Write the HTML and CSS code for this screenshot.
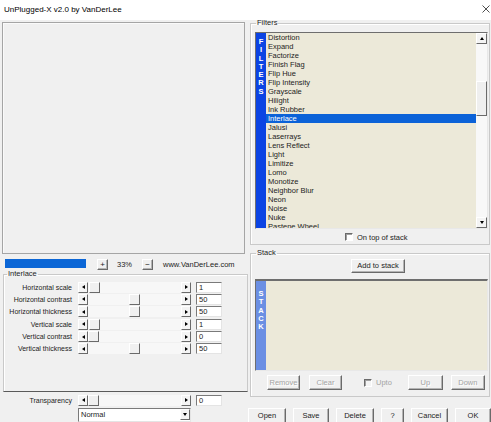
FILE: index.html
```html
<!DOCTYPE html>
<html lang="en">
  <head>
    <meta charset="UTF-8" />
    <title>UnPlugged-X v2.0 by VanDerLee</title>
    <link rel="stylesheet" href="styles.css">
  </head>
  <body>
    <div class="titlebar">
      <span class="title">UnPlugged-X v2.0 by VanDerLee</span>
      <svg class="close" width="8" height="8" viewBox="0 0 8 8"><path d="M0.5 0.5L7.5 7.5M7.5 0.5L0.5 7.5" stroke="#222" stroke-width="0.8" fill="none"/></svg>
    </div>

    <div class="main">
      <div class="left">
        <div class="preview"></div>

        <div class="zoombar">
          <div class="progress"></div>
          <div class="btn sq plus">+</div>
          <span class="pct">33%</span>
          <div class="btn sq">&minus;</div>
          <span class="site">www.VanDerLee.com</span>
        </div>

        <fieldset class="group interlace">
          <legend>Interlace</legend>
          <div class="param">
            <label>Horizontal scale</label>
            <div class="hscroll"><span class="sbtn arr-l"></span><span class="track"><span class="thumb" style="margin-left:1px"></span></span><span class="sbtn arr-r"></span></div>
            <div class="edit">1</div>
          </div>
          <div class="param">
            <label>Horizontal contrast</label>
            <div class="hscroll"><span class="sbtn arr-l"></span><span class="track"><span class="thumb" style="margin-left:41px"></span></span><span class="sbtn arr-r"></span></div>
            <div class="edit">50</div>
          </div>
          <div class="param">
            <label>Horizontal thickness</label>
            <div class="hscroll"><span class="sbtn arr-l"></span><span class="track"><span class="thumb" style="margin-left:41px"></span></span><span class="sbtn arr-r"></span></div>
            <div class="edit">50</div>
          </div>
          <div class="param">
            <label>Vertical scale</label>
            <div class="hscroll"><span class="sbtn arr-l"></span><span class="track"><span class="thumb" style="margin-left:1px"></span></span><span class="sbtn arr-r"></span></div>
            <div class="edit">1</div>
          </div>
          <div class="param">
            <label>Vertical contrast</label>
            <div class="hscroll"><span class="sbtn arr-l"></span><span class="track"><span class="thumb" style="margin-left:0px"></span></span><span class="sbtn arr-r"></span></div>
            <div class="edit">0</div>
          </div>
          <div class="param">
            <label>Vertical thickness</label>
            <div class="hscroll"><span class="sbtn arr-l"></span><span class="track"><span class="thumb" style="margin-left:41px"></span></span><span class="sbtn arr-r"></span></div>
            <div class="edit">50</div>
          </div>
        </fieldset>

        <div class="param transparency">
          <label>Transparency</label>
          <div class="hscroll"><span class="sbtn arr-l"></span><span class="track"><span class="thumb" style="margin-left:0px"></span></span><span class="sbtn arr-r"></span></div>
          <div class="edit">0</div>
        </div>
        <div class="select"><span class="sel-text">Normal</span><span class="sbtn arr-d"></span></div>
      </div>

      <div class="right">
        <fieldset class="group filters">
          <legend>Filters</legend>
          <div class="listbox filter-list">
            <div class="sidebar">F<br>I<br>L<br>T<br>E<br>R<br>S</div>
            <ul class="items">
              <li>Distortion</li>
              <li>Expand</li>
              <li>Factorize</li>
              <li>Finish Flag</li>
              <li>Flip Hue</li>
              <li>Flip Intensity</li>
              <li>Grayscale</li>
              <li>Hilight</li>
              <li>Ink Rubber</li>
              <li class="selected">Interlace</li>
              <li>Jalusi</li>
              <li>Laserrays</li>
              <li>Lens Reflect</li>
              <li>Light</li>
              <li>Limitize</li>
              <li>Lomo</li>
              <li>Monotize</li>
              <li>Neighbor Blur</li>
              <li>Neon</li>
              <li>Noise</li>
              <li>Nuke</li>
              <li>Pastene Wheel</li>
            </ul>
            <div class="vscroll">
              <span class="sbtn arr-u"></span>
              <span class="vtrack"><span class="vthumb"></span></span>
              <span class="sbtn arr-d"></span>
            </div>
          </div>
          <div class="check-row ontop"><span class="checkbox"></span>On top of stack</div>
        </fieldset>

        <fieldset class="group stack">
          <legend>Stack</legend>
          <div class="btn add">Add to stack</div>
          <div class="listbox stack-list">
            <div class="sidebar">S<br>T<br>A<br>C<br>K</div>
            <div class="stack-items"></div>
          </div>
          <div class="stack-buttons">
            <div class="btn disabled b-remove">Remove</div>
            <div class="btn disabled b-clear">Clear</div>
            <div class="check-row upto disabled"><span class="checkbox"></span>Upto</div>
            <div class="btn disabled b-up">Up</div>
            <div class="btn disabled b-down">Down</div>
          </div>
        </fieldset>

        <div class="bottom-buttons">
          <div class="btn b-open">Open</div>
          <div class="btn b-save">Save</div>
          <div class="btn b-delete">Delete</div>
          <div class="btn b-help">?</div>
          <div class="btn b-cancel">Cancel</div>
          <div class="btn b-ok">OK</div>
        </div>
      </div>
    </div>
  </body>
</html>
```

FILE: styles.css
```css
body {
  margin: 0;
  width: 491px;
  height: 422px;
  overflow: hidden;
  background-color: #f0f0f0;
  font-family: "Liberation Sans", Arial, sans-serif;
  font-size: 7.5px;
  color: #1c1c1c;
}

/* title bar */
.titlebar {
  height: 20px;
  background-color: #fff;
  display: flex;
  align-items: center;
  justify-content: space-between;
  padding: 0 1px 2px 4px;
  box-sizing: border-box;
}
.title {
  font-size: 8px;
  color: #000;
}
.close {
  margin-bottom: 1px;
}

.main {
  display: grid;
  grid-template-columns: 245px 246px;
}

/* common controls */
.btn {
  box-sizing: border-box;
  background-color: #f0f0f0;
  border: 1px solid;
  border-color: #fff #6a6a6a #6a6a6a #fff;
  box-shadow: inset -1px -1px #b4b4b4;
  display: flex;
  align-items: center;
  justify-content: center;
  line-height: 1;
}
.btn.disabled {
  color: #a3a3a3;
  text-shadow: 1px 1px #fff;
}

.sbtn {
  box-sizing: border-box;
  width: 10px;
  height: 11px;
  flex: none;
  background-color: #f4f4f4;
  border: 1px solid;
  border-color: #fff #6a6a6a #6a6a6a #fff;
  display: flex;
  align-items: center;
  justify-content: center;
}
.sbtn::after {
  content: "";
  width: 0;
  height: 0;
}
.arr-l::after {
  border-right: 3px solid #000;
  border-top: 2.5px solid transparent;
  border-bottom: 2.5px solid transparent;
}
.arr-r::after {
  border-left: 3px solid #000;
  border-top: 2.5px solid transparent;
  border-bottom: 2.5px solid transparent;
}
.arr-u::after {
  border-bottom: 3px solid #000;
  border-left: 2.5px solid transparent;
  border-right: 2.5px solid transparent;
}
.arr-d::after {
  border-top: 3px solid #000;
  border-left: 2.5px solid transparent;
  border-right: 2.5px solid transparent;
}

.group {
  margin: 0;
  padding: 0;
  border: 1px solid #c9c9c9;
  box-shadow: inset 1px 1px #fff;
  min-width: 0;
}
.group legend {
  padding: 0 1px;
  line-height: 8px;
}

.checkbox {
  box-sizing: border-box;
  width: 8px;
  height: 8px;
  background-color: #fff;
  border: 1px solid;
  border-color: #6a6a6a #fff #fff #6a6a6a;
  box-shadow: inset 1px 1px #a0a0a0;
  flex: none;
}

/* left column */
.preview {
  box-sizing: border-box;
  margin: 2px 0 0 2px;
  width: 243px;
  height: 232px;
  border: 1px solid #a5a5a5;
  box-shadow: inset 1px 1px #fafafa;
}

.zoombar {
  display: flex;
  align-items: center;
  margin-top: 5px;
  height: 11px;
}
.progress {
  margin-left: 5px;
  margin-bottom: 2px;
  width: 81px;
  height: 9px;
  background-color: #0b66d6;
}
.sq {
  width: 11px;
  height: 11px;
  font-size: 8px;
}
.plus {
  margin-left: 11px;
}
.pct {
  margin-left: 9px;
  width: 25px;
}
.site {
  margin-left: 10px;
}

.interlace {
  margin-left: 3px;
  width: 245px;
  box-sizing: border-box;
  padding: 3.5px 0 35px 0;
  border-bottom-color: #5a5a5a;
}
.interlace legend {
  margin-left: 3px;
}

.param {
  display: flex;
  align-items: center;
  height: 11px;
  margin-bottom: 1.4px;
}
.param label {
  width: 68px;
  text-align: right;
  font-size: 7px;
  flex: none;
}
.hscroll {
  display: flex;
  margin-left: 6px;
  width: 113px;
  height: 11px;
  flex: none;
}
.track {
  flex: 1;
  background-color: #f7f7f7;
  display: flex;
}
.thumb {
  box-sizing: border-box;
  width: 11px;
  height: 11px;
  background-color: #f0f0f0;
  border: 1px solid;
  border-color: #fff #6a6a6a #6a6a6a #fff;
}
.edit {
  box-sizing: border-box;
  margin-left: 5px;
  width: 26px;
  height: 11px;
  background-color: #fff;
  border: 1px solid;
  border-color: #7a7a7a #e4e4e4 #e4e4e4 #7a7a7a;
  padding-left: 2px;
  line-height: 9px;
}

.transparency {
  margin: 3px 0 0 4px;
}
.select {
  box-sizing: border-box;
  margin: 2px 0 0 78px;
  width: 113px;
  height: 14px;
  background-color: #fff;
  border: 1px solid;
  border-color: #7a7a7a #e4e4e4 #e4e4e4 #7a7a7a;
  display: flex;
  align-items: center;
  justify-content: space-between;
}
.sel-text {
  padding-left: 2px;
}

/* right column */
.filters {
  margin: -1px 0 0 5px;
  width: 240px;
  box-sizing: border-box;
  padding: 5px 0 2px 4px;
}
.filters legend,
.stack legend {
  margin-left: 1px;
}

.listbox {
  box-sizing: border-box;
  width: 233px;
  display: flex;
  background-color: #ece9d9;
  border: 1px solid;
  border-color: #6e6e6e #e8e8e8 #e8e8e8 #6e6e6e;
  overflow: hidden;
}
.filter-list {
  height: 197px;
}
.sidebar {
  width: 10px;
  flex: none;
  background-color: #0b43e3;
  color: #fff;
  font-weight: bold;
  font-size: 7.5px;
  text-align: center;
  line-height: 8.3px;
  padding-top: 5px;
  box-sizing: border-box;
}
.items {
  list-style: none;
  margin: 0;
  padding: 0;
  flex: 1;
  overflow: hidden;
}
.items li {
  height: 9px;
  line-height: 9px;
  padding-left: 2px;
  white-space: nowrap;
}
.items li.selected {
  background-color: #0b62d8;
  color: #fff;
}
.vscroll {
  width: 11px;
  flex: none;
  display: flex;
  flex-direction: column;
}
.vscroll .sbtn {
  width: 11px;
}
.vtrack {
  flex: 1;
  background-color: #f8f8f8;
}
.vthumb {
  display: block;
  box-sizing: border-box;
  margin-top: 37px;
  height: 35px;
  background-color: #efefef;
  border: 1px solid;
  border-color: #fff #6a6a6a #6a6a6a #fff;
}

.check-row {
  display: flex;
  align-items: center;
  gap: 4px;
  height: 10px;
}
.ontop {
  margin: 3px 0 0 90px;
}

.stack {
  margin: 4px 0 0 5px;
  width: 240px;
  box-sizing: border-box;
  padding: 2px 0 6px 4px;
}
.add {
  margin-left: 96px;
  width: 54px;
  height: 14px;
}
.stack-list {
  margin-top: 6px;
  height: 92px;
  border-top: 2px solid #6e6e6e;
}
.stack-list .sidebar {
  background-color: #6b8fe3;
  padding-top: 9px;
}
.stack-items {
  flex: 1;
}

.stack-buttons {
  display: flex;
  margin-top: 4px;
  height: 15px;
}
.stack-buttons .btn {
  height: 15px;
}
.b-remove {
  margin-left: 12px;
  width: 33px;
}
.b-clear {
  margin-left: 9px;
  width: 33px;
}
.upto {
  margin-left: 22px;
  height: 15px;
  color: #a3a3a3;
}
.upto .checkbox {
  background-color: #f4f4f4;
}
.b-up {
  margin-left: 16px;
  width: 35px;
}
.b-down {
  margin-left: 8px;
  width: 34px;
}

.bottom-buttons {
  display: flex;
  gap: 7px;
  margin: 11px 0 0 3px;
}
.bottom-buttons .btn {
  height: 16px;
}
.b-open { width: 38px; }
.b-save { width: 36px; }
.b-delete { width: 38px; }
.b-help { width: 23px; }
.b-cancel { width: 37px; }
.b-ok { width: 36px; }
```
